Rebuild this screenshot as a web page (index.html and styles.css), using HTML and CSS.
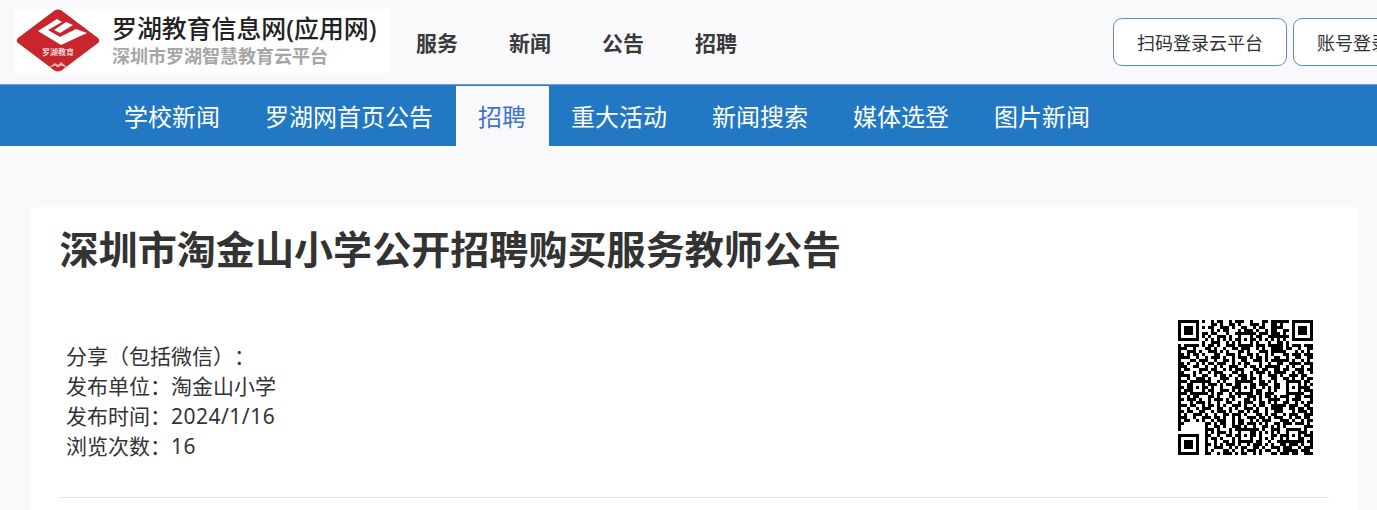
FILE: index.html
```html
<!DOCTYPE html>
<html lang="zh-CN">
<head>
<meta charset="utf-8">
<title>深圳市淘金山小学公开招聘购买服务教师公告</title>
<link rel="stylesheet" href="styles.css">
</head>
<body>
<header class="topbar">
  <a class="brand" href="#">
    <svg class="brand-mark" viewBox="0 0 84 64" aria-hidden="true">
      <path class="mark-red" d="M38.500 1.500Q42 -.5 45.500 1.500L82 29Q84.500 31.500 82 34L45.500 61.500Q42 63.500 38.500 61.500L2 34Q-.5 31.500 2 29Z"/>
      <path class="mark-white" d="M22 22L45 36L71 24L60 20L44 28L32 21L46 13L41 10Z"/>
      <path class="mark-white" d="M38 21L50 13L57 16L44 24Z"/>
      <text class="mark-text" x="42" y="46">罗湖教育</text>
      <path class="mark-peak" d="M32 59L39 54L42 56L45 53L52 59L45 56.500L42 58.500L39 56.500Z"/>
    </svg>
    <span class="brand-text">
      <span class="brand-title">罗湖教育信息网(应用网)</span>
      <span class="brand-sub">深圳市罗湖智慧教育云平台</span>
    </span>
  </a>
  <nav class="main-nav">
    <a href="#">服务</a>
    <a href="#">新闻</a>
    <a href="#">公告</a>
    <a href="#">招聘</a>
  </nav>
  <div class="login-buttons">
    <a class="login-btn" href="#">扫码登录云平台</a>
    <a class="login-btn" href="#">账号登录云平台</a>
  </div>
</header>

<nav class="sub-nav">
  <a href="#">学校新闻</a>
  <a href="#">罗湖网首页公告</a>
  <a class="active" href="#">招聘</a>
  <a href="#">重大活动</a>
  <a href="#">新闻搜索</a>
  <a href="#">媒体选登</a>
  <a href="#">图片新闻</a>
</nav>

<main class="card">
  <h1 class="title">深圳市淘金山小学公开招聘购买服务教师公告</h1>
  <section class="meta-row">
    <ul class="meta">
      <li>分享（包括微信）：</li>
      <li>发布单位：淘金山小学</li>
      <li>发布时间：<span class="num">2024/1/16</span></li>
      <li>浏览次数：<span class="num">16</span></li>
    </ul>
    <svg class="qr" viewBox="0 0 45 45" shape-rendering="crispEdges" aria-label="二维码">
      <path class="qr-data" d="M0 .5h2m1 0h1m2 0h3m2 0h1m1 0h2m2 0h1m1 0h3m2 0h1m3 0h2m1 0h3m1 0h1
M0 1.500h1m2 0h2m2 0h1m3 0h2m1 0h1m2 0h2m1 0h1m3 0h3m1 0h1m2 0h2m1 0h1
M0 2.500h3m1 0h1m3 0h1m1 0h2m2 0h3m1 0h1m2 0h2m2 0h1m1 0h2m3 0h3
M0 3.500h1m1 0h3m1 0h2m3 0h1m1 0h1m1 0h2m3 0h1m1 0h3m1 0h1m2 0h1m1 0h2
M0 4.500h2m2 0h1m2 0h3m1 0h2m3 0h1m2 0h2m1 0h1m2 0h1m1 0h3m2 0h1
M0 5.500h3m1 0h2m2 0h1m1 0h1m2 0h3m1 0h1m3 0h2m1 0h1m1 0h2m2 0h2
M0 6.500h1m8 0h1m1 0h1m1 0h1m1 0h1m1 0h1m1 0h1m1 0h1m1 0h1m1 0h1m1 0h1m1 0h1
M0 7.500h2m6 0h1m2 0h3m2 0h1m1 0h1m3 0h2m2 0h1m3 0h1m2 0h2
M0 8.500h1m1 0h5m1 0h1m1 0h2m1 0h1m2 0h3m1 0h2m2 0h1m1 0h3m1 0h3m1 0h1
M0 9.500h3m2 0h1m3 0h2m1 0h1m2 0h1m2 0h2m1 0h3m2 0h1m1 0h1m2 0h3
M0 10.500h1m2 0h3m1 0h1m2 0h3m1 0h1m1 0h1m3 0h2m1 0h1m3 0h3m1 0h2
M0 11.500h2m1 0h1m1 0h2m1 0h1m3 0h2m2 0h3m1 0h1m2 0h2m1 0h1m2 0h1m1 0h1
M0 12.500h4m2 0h1m2 0h1m1 0h3m1 0h1m2 0h1m1 0h3m1 0h1m1 0h2m1 0h1m2 0h2
M0 13.500h1m3 0h2m1 0h3m2 0h1m2 0h2m1 0h1m2 0h2m2 0h3m1 0h1m1 0h3
M0 14.500h2m1 0h1m2 0h1m1 0h1m1 0h2m1 0h3m2 0h1m1 0h1m1 0h2m3 0h1m2 0h1
M0 15.500h3m2 0h2m2 0h1m2 0h1m1 0h1m2 0h3m2 0h1m1 0h2m1 0h1m1 0h3m1 0h1
M0 16.500h1m1 0h2m3 0h3m1 0h2m2 0h1m1 0h1m1 0h3m3 0h2m1 0h2m2 0h2
M0 17.500h2m3 0h1m1 0h1m2 0h1m1 0h3m3 0h2m1 0h1m2 0h1m1 0h3m1 0h1m1 0h1
M0 18.500h4m1 0h1m2 0h2m2 0h1m1 0h2m1 0h1m2 0h3m1 0h1m2 0h1m2 0h3
M0 19.500h1m2 0h1m2 0h3m1 0h1m3 0h3m2 0h1m1 0h2m1 0h2m1 0h1m3 0h2
M0 20.500h3m1 0h1m2 0h1m1 0h2m2 0h1m1 0h1m3 0h1m2 0h3m2 0h2m1 0h1m1 0h1
M0 21.500h1m2 0h2m3 0h1m1 0h3m1 0h1m1 0h2m1 0h1m1 0h2m2 0h1m1 0h3m2 0h2
M0 22.500h2m1 0h1m1 0h1m2 0h2m1 0h1m2 0h1m3 0h2m1 0h1m3 0h1m2 0h1m1 0h1m1 0h2
M0 23.500h1m1 0h3m2 0h1m2 0h2m2 0h3m1 0h1m1 0h2m2 0h1m1 0h2m2 0h1m1 0h1
M0 24.500h3m3 0h2m1 0h1m1 0h1m1 0h2m2 0h1m1 0h3m1 0h1m2 0h2m1 0h3
M0 25.500h1m2 0h1m1 0h2m3 0h2m1 0h1m3 0h2m1 0h1m2 0h3m1 0h1m1 0h2m1 0h1
M0 26.500h2m1 0h3m1 0h1m2 0h1m1 0h3m1 0h1m1 0h1m3 0h2m1 0h1m1 0h1m2 0h3
M0 27.500h1m3 0h1m1 0h3m1 0h1m2 0h1m2 0h2m2 0h1m1 0h3m2 0h2m1 0h1m1 0h1
M0 28.500h3m1 0h2m2 0h1m1 0h2m1 0h1m1 0h1m2 0h3m1 0h1m2 0h1m1 0h2m2 0h2
M0 29.500h1m2 0h1m2 0h1m1 0h3m2 0h2m2 0h1m1 0h1m2 0h3m1 0h1m2 0h1m1 0h3
M0 30.500h2m1 0h2m2 0h2m2 0h1m1 0h3m1 0h1m2 0h2m1 0h1m1 0h2m2 0h1m2 0h1
M0 31.500h1m1 0h1m2 0h3m1 0h1m2 0h1m2 0h2m1 0h3m1 0h1m3 0h2m1 0h1m1 0h2
M0 32.500h3m2 0h1m2 0h3m1 0h2m1 0h1m2 0h1m1 0h1m2 0h3m1 0h2m1 0h1m1 0h1
M0 33.500h1m1 0h2m2 0h1m1 0h1m2 0h1m1 0h3m2 0h1m1 0h2m2 0h1m1 0h1m1 0h3
M0 34.500h2m7 0h2m1 0h1m1 0h2m2 0h1m1 0h2m1 0h3m1 0h1m1 0h1m2 0h2m1 0h1
M0 35.500h1m8 0h1m2 0h2m1 0h1m2 0h3m1 0h1m2 0h1m2 0h2m1 0h1m1 0h1m1 0h1
M0 36.500h1m8 0h3m1 0h1m3 0h1m1 0h1m2 0h2m1 0h2m1 0h1m2 0h3m2 0h2
M0 37.500h1m8 0h1m1 0h1m1 0h3m1 0h1m2 0h1m1 0h1m2 0h1m1 0h1m1 0h1m1 0h1m1 0h1m2 0h1
M9 38.500h2m2 0h1m2 0h2m1 0h3m2 0h2m1 0h1m3 0h2m1 0h2m1 0h1
M9 39.500h1m1 0h2m1 0h1m3 0h1m1 0h1m1 0h3m2 0h1m1 0h1m1 0h1m2 0h1m1 0h2
M9 40.500h1m2 0h1m2 0h2m1 0h1m2 0h2m1 0h1m1 0h2m2 0h1m2 0h3m1 0h1m2 0h1
M9 41.500h2m1 0h1m1 0h1m1 0h3m1 0h1m2 0h1m1 0h3m1 0h1m1 0h1m2 0h2m2 0h2
M9 42.500h1m2 0h3m2 0h1m1 0h1m1 0h2m2 0h2m1 0h1m2 0h3m1 0h1m1 0h1m2 0h1
M9 43.500h1m1 0h1m3 0h2m1 0h1m2 0h1m1 0h3m1 0h1m1 0h2m2 0h1m1 0h2m1 0h2
M9 44.500h2m2 0h1m1 0h3m1 0h1m1 0h2m2 0h1m1 0h1m3 0h2m1 0h1m1 0h1m1 0h2
M31 .5h2m1 0h3M31 1.500h1m2 0h1M31 2.500h4M32 3.500h1m2 0h2M31 4.500h3m1 0h1M32 5.500h5M31 6.500h1m1 0h1m1 0h1
M33 7.500h1m2 0h1m2 0h3m2 0h2M32 8.500h2m2 0h1m1 0h3m1 0h3M34 9.500h1m1 0h2m2 0h1m2 0h2M33 10.500h3m3 0h1m1 0h1m1 0h1
M35 11.500h2m1 0h3m1 0h3M33 12.500h1m2 0h1m2 0h2m2 0h2M34 13.500h3m1 0h1m2 0h1m1 0h1M33 14.500h2m2 0h4m1 0h3
M32 15.500h1m3 0h1m1 0h1m2 0h1m2 0h1M35 16.500h2m2 0h3m1 0h2M33 17.500h3m2 0h1m1 0h2m2 0h1M34 18.500h1m2 0h3m1 0h2
M35 19.500h2m1 0h1m2 0h1m1 0h2M42 20.500h2M42 21.500h1m1 0h1M41 22.500h3M42 23.500h3M41 24.500h1m2 0h1
M34 25.500h3m2 0h2m1 0h3M33 26.500h1m2 0h1m1 0h3m3 0h1M35 27.500h2m2 0h1m1 0h1m1 0h2M33 28.500h3m1 0h3m2 0h2
M34 29.500h1m2 0h2m1 0h2m1 0h2M32 30.500h3m3 0h1m1 0h3m1 0h1M35 31.500h1m1 0h3m2 0h3M33 32.500h2m2 0h1m1 0h2m1 0h2
M34 33.500h3m1 0h1m2 0h1m1 0h2M33 34.500h1m2 0h2m1 0h3m1 0h1M35 35.500h1m6 0h3M42 36.500h1M41 37.500h2m1 0h1
M42 38.500h3M41 39.500h1m2 0h1M41 40.500h1m1 0h2M34 41.500h2m1 0h3m1 0h1m2 0h1M33 42.500h1m2 0h2m2 0h1m1 0h3
M35 43.500h1m1 0h2m2 0h3M34 44.500h3m2 0h1m2 0h3"/>
      <path class="qr-clear" d="M0 0h8v8H0zM37 0h8v8h-8zM0 37h8v8H0zM4 20h5v5H4zM20 4h5v5h-5zM20 20h5v5h-5zM36 20h5v5h-5zM20 36h5v5h-5zM36 36h5v5h-5z"/>
      <path class="qr-solid" fill-rule="evenodd" d="M0 0h7v7H0zM1 1v5h5V1zM2 2h3v3H2z
M38 0h7v7h-7zM39 1v5h5V1zM40 2h3v3h-3z
M0 38h7v7H0zM1 39v5h5v-5zM2 40h3v3H2z
M4 20h5v5H4zM5 21v3h3v-3zM6 22h1v1H6z
M20 4h5v5h-5zM21 5v3h3V5zM22 6h1v1h-1z
M20 20h5v5h-5zM21 21v3h3v-3zM22 22h1v1h-1z
M36 20h5v5h-5zM37 21v3h3v-3zM38 22h1v1h-1z
M20 36h5v5h-5zM21 37v3h3v-3zM22 38h1v1h-1z
M36 36h5v5h-5zM37 37v3h3v-3zM38 38h1v1h-1z"/>
    </svg>
  </section>
  <hr class="divider">
</main>
</body>
</html>
```
FILE: styles.css
```css
* {
  box-sizing: border-box;
}

html,
body {
  height: 100%;
  overflow: hidden;
}

body {
  margin: 0;
  background: #f9f9fc;
  color: #333;
  font-family: "Noto Sans", "Noto Sans CJK SC", sans-serif;
  text-spacing-trim: space-all;
}

a {
  color: inherit;
  text-decoration: none;
}

.topbar {
  display: flex;
  align-items: center;
  height: 84px;
  padding-left: 14px;
  width: 1600px;
}

.brand {
  display: flex;
  align-items: center;
  flex: none;
  width: 377px;
  height: 64px;
  background: #fff;
  padding-left: 2px;
  margin-top: -2px;
}

.brand-mark {
  width: 84px;
  height: 64px;
  flex: none;
}

.mark-red {
  fill: #c9252d;
}

.mark-white {
  fill: #fff;
}

.mark-peak {
  fill: #eab4b4;
}

.mark-text {
  fill: #f4d4d4;
  font-size: 8px;
  font-weight: 700;
  text-anchor: middle;
  font-family: "Noto Sans CJK SC", sans-serif;
}

.brand-text {
  display: flex;
  flex-direction: column;
  margin-left: 12px;
  margin-top: -3px;
}

.brand-title {
  font-size: 24.900px;
  line-height: 33px;
  font-weight: 500;
  color: #222;
  white-space: nowrap;
}

.brand-sub {
  font-size: 18px;
  line-height: 22px;
  font-weight: 700;
  color: #a6a6a6;
  white-space: nowrap;
}

.main-nav {
  display: flex;
  flex: none;
  gap: 51px;
  margin-left: 25px;
  margin-top: -1px;
  font-size: 21px;
  font-weight: 700;
  color: #3a3a3a;
}

.login-buttons {
  display: flex;
  flex: none;
  gap: 6px;
  margin-left: 376px;
}

.login-btn {
  display: flex;
  align-items: center;
  justify-content: center;
  width: 174px;
  height: 48px;
  background: #fff;
  border: 1px solid #5c8ccf;
  border-radius: 9px;
  font-size: 18px;
  color: #333;
}

.sub-nav {
  display: flex;
  height: 62px;
  padding: 1px 0 0 101.500px;
  background: #2278c2;
  border-top: 1px solid #6da3d2;
}

.sub-nav a {
  display: flex;
  align-items: center;
  padding: 0 22.500px 2px;
  font-size: 24px;
  color: #fff;
  white-space: nowrap;
}

.sub-nav a.active {
  background: #f9f9fc;
  color: #3f74c4;
}

.card {
  margin: 61px 18px 0 30px;
  padding: 15px 30px 40px;
  background: #fff;
  border-radius: 6px;
}

.title {
  margin: 0 0 0 -0.500px;
  font-size: 39.100px;
  line-height: 54px;
  font-weight: 700;
  color: #333;
}

.meta-row {
  display: flex;
  justify-content: space-between;
  align-items: flex-start;
  margin-top: 44px;
  padding: 0 16px 0 6px;
}

.meta {
  margin: 21px 0 0;
  padding: 0;
  list-style: none;
  font-size: 21px;
  line-height: 30px;
  color: #333;
}

.num {
  letter-spacing: 0.500px;
}

.qr {
  display: block;
  width: 135px;
  height: 135px;
}

.qr-data {
  fill: none;
  stroke: #000;
  stroke-width: 1;
}

.qr-clear {
  fill: #fff;
}

.qr-solid {
  fill: #000;
}

.divider {
  height: 1px;
  margin: 36px 0 0;
  border: 0;
  background: #e5e5e5;
}
```
